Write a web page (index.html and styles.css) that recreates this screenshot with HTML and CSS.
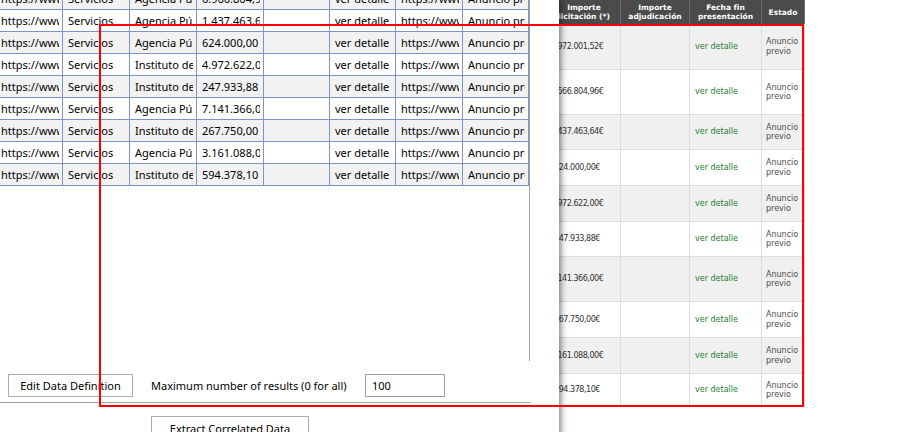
FILE: index.html
```html
<!DOCTYPE html>
<html lang="es">
<head>
<meta charset="utf-8">
<title>Extract Correlated Data</title>
<link rel="stylesheet" href="styles.css">
</head>
<body>
<div class="web">
  <div class="wtable">
    <div class="wrow whead">
      <div class="wh">Importe<br>licitación (*)</div>
      <div class="wh">Importe<br>adjudicación</div>
      <div class="wh">Fecha fin<br>presentación</div>
      <div class="wh">Estado</div>
    </div>
    <div class="wrow odd h46"><div class="wc num">1.972.001,52€</div><div class="wc"></div><div class="wc lnk">ver detalle</div><div class="wc est">Anuncio previo</div></div>
    <div class="wrow h45"><div class="wc num">5.566.804,96€</div><div class="wc"></div><div class="wc lnk">ver detalle</div><div class="wc est">Anuncio previo</div></div>
    <div class="wrow odd h35"><div class="wc num">1.437.463,64€</div><div class="wc"></div><div class="wc lnk">ver detalle</div><div class="wc est">Anuncio previo</div></div>
    <div class="wrow h36"><div class="wc num">624.000,00€</div><div class="wc"></div><div class="wc lnk">ver detalle</div><div class="wc est">Anuncio previo</div></div>
    <div class="wrow odd h36"><div class="wc num">4.972.622,00€</div><div class="wc"></div><div class="wc lnk">ver detalle</div><div class="wc est">Anuncio previo</div></div>
    <div class="wrow h35"><div class="wc num">247.933,88€</div><div class="wc"></div><div class="wc lnk">ver detalle</div><div class="wc est">Anuncio previo</div></div>
    <div class="wrow odd h45"><div class="wc num">7.141.366,00€</div><div class="wc"></div><div class="wc lnk">ver detalle</div><div class="wc est">Anuncio previo</div></div>
    <div class="wrow h36"><div class="wc num">267.750,00€</div><div class="wc"></div><div class="wc lnk">ver detalle</div><div class="wc est">Anuncio previo</div></div>
    <div class="wrow odd h36"><div class="wc num">3.161.088,00€</div><div class="wc"></div><div class="wc lnk">ver detalle</div><div class="wc est">Anuncio previo</div></div>
    <div class="wrow h33"><div class="wc num">594.378,10€</div><div class="wc"></div><div class="wc lnk">ver detalle</div><div class="wc est">Anuncio previo</div></div>
  </div>
</div>

<div class="win">
  <div class="grid">
    <div class="rows">
      <div class="row alt"><div class="c"><span>https://www.contrataciondelestado.es</span></div><div class="c"><span>Servicios</span></div><div class="c"><span>Agencia Pública de Obra</span></div><div class="c"><span>6.966.864,96</span></div><div class="c n"><span></span></div><div class="c n"><span>ver detalle</span></div><div class="c"><span>https://www.contrataciondelestado.es</span></div><div class="c n"><span>Anuncio previo</span></div></div>
      <div class="row"><div class="c"><span>https://www.contrataciondelestado.es</span></div><div class="c"><span>Servicios</span></div><div class="c"><span>Agencia Pública de Obra</span></div><div class="c"><span>1.437.463,64</span></div><div class="c n"><span></span></div><div class="c n"><span>ver detalle</span></div><div class="c"><span>https://www.contrataciondelestado.es</span></div><div class="c n"><span>Anuncio previo</span></div></div>
      <div class="row alt"><div class="c"><span>https://www.contrataciondelestado.es</span></div><div class="c"><span>Servicios</span></div><div class="c"><span>Agencia Pública de Obra</span></div><div class="c"><span>624.000,00</span></div><div class="c n"><span></span></div><div class="c n"><span>ver detalle</span></div><div class="c"><span>https://www.contrataciondelestado.es</span></div><div class="c n"><span>Anuncio previo</span></div></div>
      <div class="row"><div class="c"><span>https://www.contrataciondelestado.es</span></div><div class="c"><span>Servicios</span></div><div class="c"><span>Instituto de Salud</span></div><div class="c"><span>4.972.622,00</span></div><div class="c n"><span></span></div><div class="c n"><span>ver detalle</span></div><div class="c"><span>https://www.contrataciondelestado.es</span></div><div class="c n"><span>Anuncio previo</span></div></div>
      <div class="row alt"><div class="c"><span>https://www.contrataciondelestado.es</span></div><div class="c"><span>Servicios</span></div><div class="c"><span>Instituto de Salud</span></div><div class="c"><span>247.933,88</span></div><div class="c n"><span></span></div><div class="c n"><span>ver detalle</span></div><div class="c"><span>https://www.contrataciondelestado.es</span></div><div class="c n"><span>Anuncio previo</span></div></div>
      <div class="row"><div class="c"><span>https://www.contrataciondelestado.es</span></div><div class="c"><span>Servicios</span></div><div class="c"><span>Agencia Pública de Obra</span></div><div class="c"><span>7.141.366,00</span></div><div class="c n"><span></span></div><div class="c n"><span>ver detalle</span></div><div class="c"><span>https://www.contrataciondelestado.es</span></div><div class="c n"><span>Anuncio previo</span></div></div>
      <div class="row alt"><div class="c"><span>https://www.contrataciondelestado.es</span></div><div class="c"><span>Servicios</span></div><div class="c"><span>Instituto de Salud</span></div><div class="c"><span>267.750,00</span></div><div class="c n"><span></span></div><div class="c n"><span>ver detalle</span></div><div class="c"><span>https://www.contrataciondelestado.es</span></div><div class="c n"><span>Anuncio previo</span></div></div>
      <div class="row"><div class="c"><span>https://www.contrataciondelestado.es</span></div><div class="c"><span>Servicios</span></div><div class="c"><span>Agencia Pública de Obra</span></div><div class="c"><span>3.161.088,00</span></div><div class="c n"><span></span></div><div class="c n"><span>ver detalle</span></div><div class="c"><span>https://www.contrataciondelestado.es</span></div><div class="c n"><span>Anuncio previo</span></div></div>
      <div class="row alt"><div class="c"><span>https://www.contrataciondelestado.es</span></div><div class="c"><span>Servicios</span></div><div class="c"><span>Instituto de Salud</span></div><div class="c"><span>594.378,10</span></div><div class="c n"><span></span></div><div class="c n"><span>ver detalle</span></div><div class="c"><span>https://www.contrataciondelestado.es</span></div><div class="c n"><span>Anuncio previo</span></div></div>
    </div>
  </div>
  <div class="bar">
    <button class="btn btn-edit" type="button">Edit Data Definition</button>
    <label class="lbl" for="maxres">Maximum number of results (0 for all)</label>
    <input class="inp" id="maxres" type="text" value="100">
  </div>
  <div class="sep"></div>
  <div class="actions">
    <button class="btn btn-extract" type="button">Extract Correlated Data</button>
  </div>
</div>

<div class="mark"></div>
</body>
</html>
```

FILE: styles.css
```css
html, body {
  margin: 0;
  padding: 0;
  width: 904px;
  height: 432px;
  overflow: hidden;
  background: #fff;
}

/* ---------- web page behind ---------- */
.web {
  position: absolute;
  left: 0;
  top: 0;
  width: 904px;
  height: 432px;
  background: #fff;
  font-family: "DejaVu Sans", Verdana, sans-serif;
}
.wtable {
  margin-left: 548px;
  width: 257px;
}
.wrow {
  display: grid;
  grid-template-columns: 73px 69px 72px 43px;
  box-sizing: border-box;
  border-bottom: 1px solid #dcdcdc;
  background: #fff;
}
.wrow.odd { background: #f0f0f0; }
.h46 { height: 46px; }
.h45 { height: 45px; }
.h36 { height: 36px; }
.h35 { height: 35px; }
.h33 { height: 33px; }

.whead {
  height: 24px;
  background: #4b4b4b;
  border-bottom: none;
}
.wh {
  display: flex;
  align-items: center;
  justify-content: center;
  text-align: center;
  border-right: 1px solid #6c6c6c;
  color: #fff;
  font-weight: bold;
  font-size: 7.5px;
  line-height: 9px;
}
.wc {
  display: flex;
  align-items: center;
  box-sizing: border-box;
  border-right: 1px solid #dcdcdc;
  font-size: 8px;
  line-height: 9.5px;
  padding: 0 3px 0 4px;
}
.num {
  justify-content: center;
  padding: 0 14px 0 0;
  letter-spacing: -0.45px;
  color: #333;
  white-space: nowrap;
}
.lnk {
  color: #1f7d33;
  padding-left: 5px;
  white-space: nowrap;
}
.est {
  color: #4d4d4d;
}

/* ---------- application window ---------- */
.win {
  position: absolute;
  left: 0;
  top: 0;
  width: 559px;
  height: 450px;
  background: #fff;
  box-shadow: 2px 0 6px rgba(0, 0, 0, 0.5);
  font-family: "Noto Sans", "Segoe UI", sans-serif;
  font-size: 11px;
  color: #000;
}
.grid {
  width: 530px;
  height: 361px;
  box-sizing: border-box;
  border-right: 1px solid #a0a0a0;
  overflow: hidden;
}
.rows {
  margin: -12px 0 0 -5px;
}
.row {
  display: flex;
  width: max-content;
  height: 22px;
  box-sizing: border-box;
  border-left: 1px solid #7b96c2;
  border-bottom: 1px solid #7b96c2;
  background: #fff;
}
.row.alt { background: #f2f2f2; }
.c {
  flex: none;
  width: 67px;
  box-sizing: border-box;
  border-right: 1px solid #7b96c2;
  padding-left: 5px;
  display: flex;
  align-items: center;
  overflow: hidden;
}
.c.n { width: 66px; }
.c span {
  flex: 1;
  min-width: 0;
  overflow: hidden;
  white-space: nowrap;
  margin-right: 3px;
}

.bar {
  display: flex;
  align-items: center;
  height: 23px;
  margin-top: 13px;
}
.btn {
  height: 23px;
  box-sizing: border-box;
  border: 1px solid #adadad;
  background: #fff;
  margin: 0;
  padding: 0;
  font: inherit;
  color: #000;
  display: flex;
  align-items: center;
  justify-content: center;
}
.btn-edit {
  margin-left: 8px;
  width: 125px;
}
.lbl {
  margin-left: 18px;
  width: 214px;
  flex: none;
}
.inp {
  width: 80px;
  height: 23px;
  box-sizing: border-box;
  border: 1px solid #a0a0a0;
  margin: 0;
  padding: 0 0 0 6px;
  font: inherit;
  color: #000;
  background: #fff;
  outline: none;
}
.sep {
  width: 530px;
  height: 1px;
  margin-top: 5px;
  background: #a0a0a0;
}
.actions {
  margin-top: 13px;
  padding-left: 151px;
}
.btn-extract {
  width: 158px;
  height: 24px;
}

/* ---------- red highlight ---------- */
.mark {
  position: absolute;
  left: 99px;
  top: 24px;
  width: 705px;
  height: 383px;
  box-sizing: border-box;
  border: 2px solid #ff0000;
}
```
